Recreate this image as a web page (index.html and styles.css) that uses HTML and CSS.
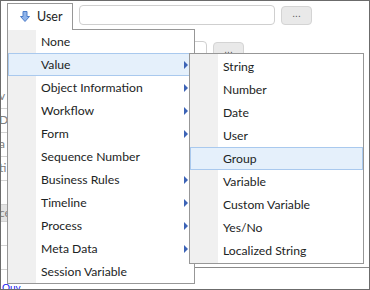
FILE: index.html
```html
<!DOCTYPE html>
<html lang="en">
<head>
    <meta charset="UTF-8">
    <title>Value Picker</title>
    <link rel="stylesheet" href="styles.css">
</head>
<body>
    <div class="frame">
        <div class="row first">
            <button class="picker open">
                <svg width="10" height="11" viewBox="0 0 10 11"><path d="M3 0.5h4v5h2.5l-4.5 5l-4.5-5h2.5z" fill="#8fb4ea" stroke="#4d7cc8" stroke-width="1"/></svg>
                User
            </button>
            <input class="field" type="text">
            <button class="dots">...</button>
        </div>
        <div class="row second">
            <input class="field short" type="text">
            <button class="dots">...</button>
        </div>
        <div class="grid">
            <div class="cell">v</div>
            <div class="cell">D</div>
            <div class="cell">a</div>
            <div class="cell">ti</div>
            <div class="cell"></div>
            <div class="cell shade">ce</div>
            <div class="cell"></div>
            <div class="cell"></div>
        </div>
        <div class="panel-line"></div>
        <a class="link" href="#">Ouv</a>

        <ul class="menu main">
            <li>None</li>
            <li class="sub active">Value</li>
            <li class="sub">Object Information</li>
            <li class="sub">Workflow</li>
            <li class="sub">Form</li>
            <li>Sequence Number</li>
            <li class="sub">Business Rules</li>
            <li class="sub">Timeline</li>
            <li class="sub">Process</li>
            <li class="sub">Meta Data</li>
            <li>Session Variable</li>
        </ul>
        <ul class="menu child">
            <li>String</li>
            <li>Number</li>
            <li>Date</li>
            <li>User</li>
            <li class="active">Group</li>
            <li>Variable</li>
            <li>Custom Variable</li>
            <li>Yes/No</li>
            <li>Localized String</li>
        </ul>
    </div>
</body>
</html>
```

FILE: styles.css
```css
body {
    margin: 0;
    font-family: 'Lato', sans-serif;
    font-size: 12px;
    color: #1c2424;
    background: #fff;
}

.frame {
    position: relative;
    width: 370px;
    height: 290px;
    box-sizing: border-box;
    border: 1px solid #6b6b6b;
    overflow: hidden;
}

.row {
    display: flex;
    align-items: flex-start;
}

.row.first {
    padding: 2px 0 0 6px;
    height: 28px;
}

.row.second {
    padding: 8px 0 0 0;
    margin-left: 150px;
}

.picker {
    position: relative;
    z-index: 3;
    display: flex;
    align-items: center;
    gap: 7px;
    height: 27px;
    width: 66px;
    padding: 0 0 1px 12px;
    border: 1px solid #979797;
    border-bottom: none;
    background: #fff;
    font-family: inherit;
    font-size: 12.5px;
    color: #1c2424;
}

.field {
    margin: 2px 0 0 6px;
    width: 196px;
    height: 20px;
    box-sizing: border-box;
    border: 1px solid #cfcfcf;
    border-radius: 4px;
    background: #fff;
}

.field.short {
    width: 56px;
    margin-left: 0;
}

.dots {
    margin: 3px 0 0 6px;
    width: 31px;
    height: 19px;
    border: 1px solid #d4d4d4;
    border-radius: 4px;
    background: #e9e9e9;
    color: #555;
    font-size: 10px;
    line-height: 12px;
    padding: 0 0 4px;
}

.grid {
    margin-top: 24px;
    width: 8px;
}

.cell {
    height: 23px;
    border-bottom: 1px solid #d2d2d2;
    color: #808080;
    font-size: 12px;
    line-height: 22px;
    overflow: hidden;
    text-indent: -2px;
}

.cell.shade {
    background: #e3e3e3;
    height: 16px;
    line-height: 16px;
}

.panel-line {
    position: absolute;
    left: 193px;
    right: 0;
    top: 266px;
    border-top: 1px solid #8a8a8a;
}

.link {
    position: absolute;
    left: 1px;
    top: 280px;
    color: #1010ee;
    font-size: 10px;
    line-height: 12px;
    text-decoration: underline;
}

.menu {
    position: absolute;
    margin: 0;
    padding: 0;
    list-style: none;
    box-sizing: border-box;
    border: 1px solid #979797;
    background: linear-gradient(to right, #f0f0f0 28px, #fff 28px);
    z-index: 2;
}

.menu li {
    position: relative;
    height: 23px;
    line-height: 21px;
    padding-left: 32px;
    font-size: 12.2px;
    box-sizing: border-box;
    border: 1px solid transparent;
}

.menu li.active {
    background: #e5f0fb;
    border-color: #a9c9ee;
}

.menu li.sub::after {
    content: "";
    position: absolute;
    right: 5px;
    top: 7px;
    border-left: 4px solid #3c63b6;
    border-top: 4px solid transparent;
    border-bottom: 4px solid transparent;
}

.menu.main {
    left: 6px;
    top: 28px;
    width: 188px;
    height: 255px;
}

.menu.child {
    left: 188px;
    top: 52px;
    width: 175px;
    height: 211px;
    padding: 1px 0;
    z-index: 4;
}
```
